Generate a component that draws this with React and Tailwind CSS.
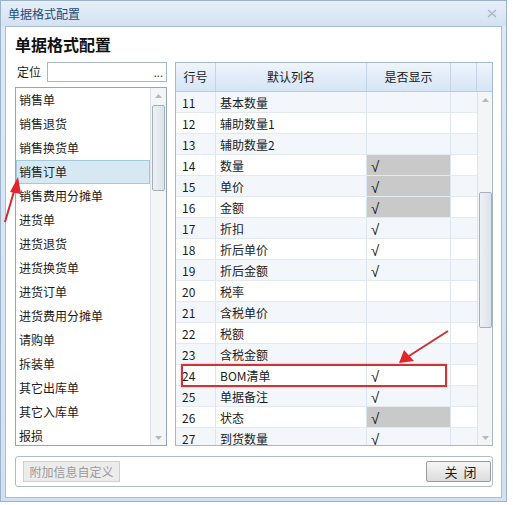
import React from "react";

const listItems = [
  "销售单", "销售退货", "销售换货单", "销售订单", "销售费用分摊单", "进货单", "进货退货",
  "进货换货单", "进货订单", "进货费用分摊单", "请购单", "拆装单", "其它出库单", "其它入库单", "报损",
];

const rows = [
  [11, "基本数量", 0, 0], [12, "辅助数量1", 0, 0], [13, "辅助数量2", 0, 0], [14, "数量", 1, 1],
  [15, "单价", 1, 1], [16, "金额", 1, 1], [17, "折扣", 1, 0], [18, "折后单价", 1, 0],
  [19, "折后金额", 1, 0], [20, "税率", 0, 0], [21, "含税单价", 0, 0], [22, "税额", 0, 0],
  [23, "含税金额", 0, 0], [24, "BOM清单", 1, 0], [25, "单据备注", 1, 0], [26, "状态", 1, 1],
  [27, "到货数量", 1, 0],
];

function UpArrow() {
  return (
    <svg width="7" height="4" viewBox="0 0 7 4"><path d="M0 4 L3.5 0 L7 4 Z" fill="#b4b9c0" /></svg>
  );
}
function DownArrow() {
  return (
    <svg width="7" height="4" viewBox="0 0 7 4"><path d="M0 0 L3.5 4 L7 0 Z" fill="#b4b9c0" /></svg>
  );
}

export default function App() {
  return (
    <div className="relative w-[513px] h-[505px] bg-white overflow-hidden font-['Noto_Sans_CJK_SC','Noto_Sans',sans-serif] text-[12px] text-[#1b1b1b]">
      <div className="w-[507px] h-[502px] border border-[#9db3ca] bg-linear-to-b from-[#dde9f6] to-[#d2e1f1] flex flex-col">
        {/* title bar */}
        <div className="h-[25px] flex items-center justify-between pl-[7px] pr-[9px] bg-linear-to-b from-[#e6eff9] to-[#d3e2f2]">
          <span className="text-[12px] text-[#1e4a78] leading-none">单据格式配置</span>
          <svg width="10" height="9" viewBox="0 0 10 9">
            <path d="M1 1 L9 8 M9 1 L1 8" stroke="#a9b1bb" strokeWidth="1.2" />
            <path d="M2 1 L9 7" stroke="#c9ced5" strokeWidth="0.8" />
          </svg>
        </div>
        {/* panel */}
        <div className="ml-[4px] w-[497px] h-[472px] bg-white border border-[#aabdd1] pl-[9px] pr-[8px] flex flex-col">
          <div className="h-[35px] flex items-center">
            <span className="text-[16px] font-bold leading-none text-[#111] -mt-[1px]">单据格式配置</span>
          </div>
          <div className="h-[384px] flex gap-[8px]">
            {/* left column */}
            <div className="w-[152px] flex flex-col">
              <div className="h-[20px] flex items-center">
                <span className="w-[32px] pl-[2px] leading-none">定位</span>
                <div className="flex-1 h-[20px] border border-[#a9b6c4] flex items-center justify-end pr-[3px]">
                  <span className="text-[11px] leading-none text-[#333]">...</span>
                </div>
              </div>
              <div className="mt-[5px] h-[359px] border border-[#93a6ba] flex">
                <div className="flex-1 flex flex-col">
                  {listItems.map((t, i) => (
                    <div
                      key={t}
                      className={
                        i === 3
                          ? "h-[24px] leading-[22px] pl-[2px] bg-[#d6e9f2] border border-[#a3cadc]"
                          : "h-[24px] leading-[24px] pl-[3px]"
                      }
                    >
                      {t}
                    </div>
                  ))}
                </div>
                <div className="w-[16px] border-l border-[#dfe3e8] bg-[#f4f5f7] flex flex-col items-center">
                  <div className="h-[16px] flex items-center justify-center"><UpArrow /></div>
                  <div className="w-[13px] h-[86px] mt-[1px] rounded-[2px] border border-[#a6b0bc] bg-linear-to-r from-[#eef1f5] to-[#dde3ea]" />
                  <div className="flex-1" />
                  <div className="h-[14px] flex items-center justify-center"><DownArrow /></div>
                </div>
              </div>
            </div>
            {/* table */}
            <div className="w-[318px] h-[384px] border border-[#a3b8cd] flex flex-col">
              <div className="h-[29px] flex border-b border-[#b8cbe0] bg-linear-to-b from-[#eef4fb] to-[#d6e5f5] text-[12px]">
                <div className="w-[40px] border-r border-[#c2d3e5] flex items-center justify-center">行号</div>
                <div className="w-[151px] border-r border-[#c2d3e5] flex items-center justify-center">默认列名</div>
                <div className="w-[84px] border-r border-[#c2d3e5] flex items-center justify-center">是否显示</div>
                <div className="w-[26px] border-r border-[#c2d3e5]" />
                <div className="flex-1" />
              </div>
              <div className="flex-1 flex overflow-hidden">
                <div className="w-[301px] flex flex-col overflow-hidden">
                  {rows.map(([n, name, chk, grey]) => (
                    <div
                      key={n}
                      className={
                        "h-[21px] shrink-0 flex border-b border-[#e2e9f1] " +
                        (n % 2 === 1 ? "bg-[#f3f7fc]" : "bg-white")
                      }
                    >
                      <div className="w-[40px] border-r border-[#dde5ee] pl-[6px] flex items-center pt-[2px]">{n}</div>
                      <div className="w-[151px] border-r border-[#dde5ee] pl-[4px] flex items-center pt-[2px]">{name}</div>
                      <div
                        className={
                          "w-[84px] border-r border-[#dde5ee] pl-[4px] flex items-center pt-[2px] text-[15px] leading-none font-['Liberation_Sans',sans-serif] " +
                          (grey ? "bg-[#c9c9c9]" : "")
                        }
                      >
                        {chk ? "√" : ""}
                      </div>
                      <div className="w-[26px]" />
                    </div>
                  ))}
                </div>
                <div className="flex-1 border-l border-[#dfe3e8] bg-[#f4f5f7] flex flex-col items-center">
                  <div className="h-[16px] flex items-center justify-center"><UpArrow /></div>
                  <div className="w-[13px] h-[136px] mt-[84px] rounded-[2px] border border-[#a6b0bc] bg-linear-to-r from-[#eef1f5] to-[#dde3ea]" />
                  <div className="flex-1" />
                  <div className="h-[14px] flex items-center justify-center"><DownArrow /></div>
                </div>
              </div>
            </div>
          </div>
          {/* footer group */}
          <div className="mt-[10px] h-[31px] border border-[#b3bcc6] rounded-[3px] flex items-center justify-between pl-[7px] pr-[1px]">
            <div className="w-[97px] h-[21px] border border-[#cfcfcf] bg-[#ececec] text-[#9a9a9a] flex items-center justify-center leading-none">
              附加信息自定义
            </div>
            <div className="w-[65px] h-[21px] border border-[#9a9a9a] rounded-[2px] bg-linear-to-b from-[#f6f6f6] to-[#dcdcdc] flex items-center justify-center gap-[6px] leading-none text-[13px] pl-[4px]">
              <span>关</span>
              <span>闭</span>
            </div>
          </div>
        </div>
      </div>

      {/* annotations */}
      <div className="absolute left-[181px] top-[364px] w-[266px] h-[23px] border-2 border-[#c8363a] shadow-[0_0_2px_rgba(220,60,60,0.5)] pointer-events-none" />
      <svg className="absolute left-0 top-0 pointer-events-none" width="513" height="505" viewBox="0 0 513 505">
        <line x1="5" y1="222" x2="15" y2="188" stroke="#d42a2e" strokeWidth="2" />
        <path d="M18 177 L10 192 L21 194 Z" fill="#e0262b" />
        <line x1="448" y1="331" x2="409" y2="356" stroke="#c83034" strokeWidth="2" />
        <path d="M399 363 L404 350 L414 361 Z" fill="#e0262b" />
      </svg>
    </div>
  );
}
